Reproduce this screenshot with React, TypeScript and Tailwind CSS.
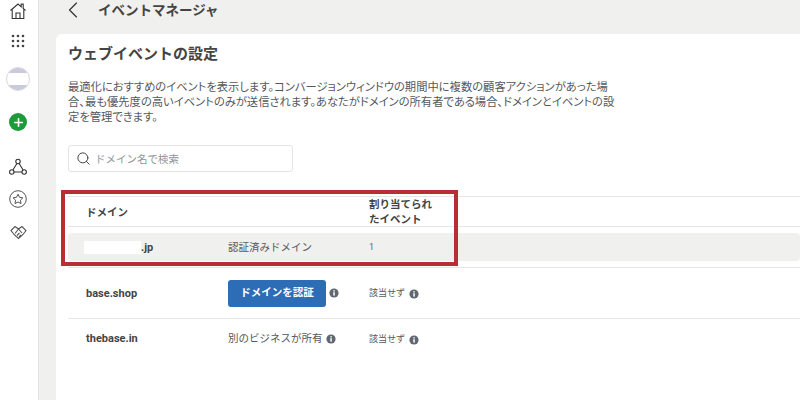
import { ChevronLeft, Search, Plus } from 'lucide-react'

const infoIcon = (
  <svg width="10" height="10" viewBox="0 0 10 10" className="shrink-0">
    <circle cx="5" cy="5" r="4.6" fill="#606770" />
    <rect x="4.3" y="4.2" width="1.5" height="3.4" fill="#fff" />
    <rect x="4.3" y="2.2" width="1.5" height="1.3" fill="#fff" />
  </svg>
)

function Sidebar() {
  return (
    <div className="w-[39px] shrink-0 h-full bg-white border-r border-[#e4e4e2] pr-[2px] flex flex-col items-center">
      {/* home */}
      <svg width="18" height="18" viewBox="0 0 18 18" fill="none" stroke="#333" strokeWidth="1.1" className="mt-[2px]">
        <path d="M1.5 8.5 9 2l3.2 2.8V2h2v4.5l2.3 2" />
        <path d="M3.2 7.5V16.5h11.6V7.5" />
        <path d="M7 16.5v-5.5h4v5.5" />
      </svg>
      {/* grid */}
      <svg width="14" height="14" viewBox="0 0 14 14" fill="#444" className="mt-[14px]">
        <circle cx="2" cy="2" r="1.3" /><circle cx="7" cy="2" r="1.3" /><circle cx="12" cy="2" r="1.3" />
        <circle cx="2" cy="7" r="1.3" /><circle cx="7" cy="7" r="1.3" /><circle cx="12" cy="7" r="1.3" />
        <circle cx="2" cy="12" r="1.3" /><circle cx="7" cy="12" r="1.3" /><circle cx="12" cy="12" r="1.3" />
      </svg>
      {/* avatar */}
      <div className="mt-[19px] w-[24px] h-[24px] rounded-full border border-[#d9d9de] bg-white overflow-hidden flex flex-col justify-between">
        <div className="h-[5px] bg-[#c9cbdc]" />
        <div className="h-[5px] bg-[#c9cbdc]" />
      </div>
      <div className="mt-[22px] w-[18px] h-[18px] rounded-full bg-[#1c9a3c] flex items-center justify-center">
        <Plus size={13} strokeWidth={3} color="#fff" />
      </div>
      {/* network */}
      <svg width="20" height="20" viewBox="0 0 20 20" fill="none" stroke="#333" strokeWidth="1.1" className="mt-[26px]">
        <circle cx="10" cy="4.5" r="2.2" />
        <circle cx="3.8" cy="15" r="2.2" />
        <circle cx="16.2" cy="15" r="2.2" />
        <path d="M8.9 6.5 4.9 13M11.1 6.5l4 6.5M6 15h8" />
      </svg>
      {/* star badge */}
      <svg width="18" height="18" viewBox="0 0 18 18" fill="none" stroke="#555" strokeWidth="1" className="mt-[13px]">
        <circle cx="9" cy="9" r="8.3" />
        <path d="M9 4.2l1.5 3.1 3.4.5-2.5 2.4.6 3.4L9 12l-3 1.6.6-3.4-2.5-2.4 3.4-.5z" />
      </svg>
      {/* handshake */}
      <svg width="17" height="15" viewBox="0 0 17 15" fill="none" stroke="#555" strokeWidth="1.1" className="mt-[17px]">
        <path d="M1 5.5 5 1.5l3.5 2.5L12 1.5l4 4-3 4-4.5 4-4.5-4z" />
        <path d="M5 8.5 8.5 4l3.5 4M7 10.5l2.5-2.5M9 12l2-2" />
      </svg>
    </div>
  )
}

export default function App() {
  return (
    <div
      className="relative w-[800px] h-[400px] overflow-hidden flex bg-[#f0f0ee] text-[#55585e]"
      style={{ fontFamily: '"Roboto", "Noto Sans CJK JP", sans-serif' }}
    >
      <Sidebar />
      <div className="flex-1 min-w-0 pl-[17px]">
        <div className="h-[34px] flex items-center pl-[8px]">
          <ChevronLeft size={28} strokeWidth={1} color="#333" className="-mt-[14px] -ml-[5px]" />
          <span className="ml-[11px] -mt-[14px] text-[13.5px] font-bold text-[#444]">イベントマネージャ</span>
        </div>
        <div className="h-[366px] bg-white rounded-tl-[6px] pl-[12px]">
          <h1 className="pt-[9px] text-[15px] leading-[22px] font-bold text-[#444]">ウェブイベントの設定</h1>
          <p className="mt-[15px] w-[548px] text-[11.3px] leading-[15px] text-[#55585e] [font-feature-settings:'palt']">
            最適化におすすめのイベントを表示します。コンバージョンウィンドウの期間中に複数の顧客アクションがあった場合、最も優先度の高いイベントのみが送信されます。あなたがドメインの所有者である場合、ドメインとイベントの設定を管理できます。
          </p>
          <div className="mt-[20px] w-[225px] h-[27px] border border-[#e4e4e2] rounded-[3px] flex items-center pl-[7px] gap-[4px]">
            <Search size={15} strokeWidth={1.6} color="#444" />
            <span className="pt-[2px] text-[10.5px] text-[#90949c]">ドメイン名で検索</span>
          </div>
          <div className="mt-[24px] border-y border-[#e6e6e6] h-[31px] flex items-center pl-[18px]">
            <span className="pt-[3px] w-[283px] text-[10.5px] font-bold text-[#444]">ドメイン</span>
            <span className="w-[70px] text-[10.5px] leading-[15px] font-bold text-[#444] mt-[1px]">割り当てられたイベント</span>
          </div>
          <div className="mt-[6px] bg-[#f0f0ee] rounded-[4px] h-[28px] flex items-center pl-[16px]">
            <div className="w-[57px] h-[13px] bg-white mt-[1px]" />
            <span className="pt-[2px] w-[87px] text-[11px] font-bold text-[#444]">.jp</span>
            <span className="pt-[1px] w-[141px] text-[10.5px]">認証済みドメイン</span>
            <span className="pt-[1px] text-[9px] text-[#666]">1</span>
          </div>
          <div className="mt-[6px] border-t border-[#e6e6e6] h-[51px] flex items-center pl-[18px]">
            <span className="pt-[2px] w-[142px] text-[11px] font-bold text-[#444]">base.shop</span>
            <div className="w-[141px] flex items-start gap-[3px]">
              <div className="w-[98px] h-[27px] bg-[#2d6db5] rounded-[3px] text-white text-[10.5px] font-bold flex items-center justify-center">ドメインを認証</div>
              <div className="mt-[8px]">{infoIcon}</div>
            </div>
            <span className="pt-[2px] text-[9px]">該当せず</span>
            <span className="ml-[4px] pt-[2px]">{infoIcon}</span>
          </div>
          <div className="border-t border-[#e6e6e6] h-[40px] flex items-center pl-[18px]">
            <span className="pt-[2px] w-[142px] text-[11px] font-bold text-[#444]">thebase.in</span>
            <div className="pt-[1px] w-[141px] flex items-center gap-[3px]">
              <span className="text-[10.5px]">別のビジネスが所有</span>
              {infoIcon}
            </div>
            <span className="pt-[2px] text-[9px]">該当せず</span>
            <span className="ml-[4px] pt-[2px]">{infoIcon}</span>
          </div>
        </div>
      </div>
      {/* annotation box */}
      <div className="absolute left-[61px] top-[190px] w-[397px] h-[76px] border-[4px] border-[#b52f35]" />
    </div>
  )
}
